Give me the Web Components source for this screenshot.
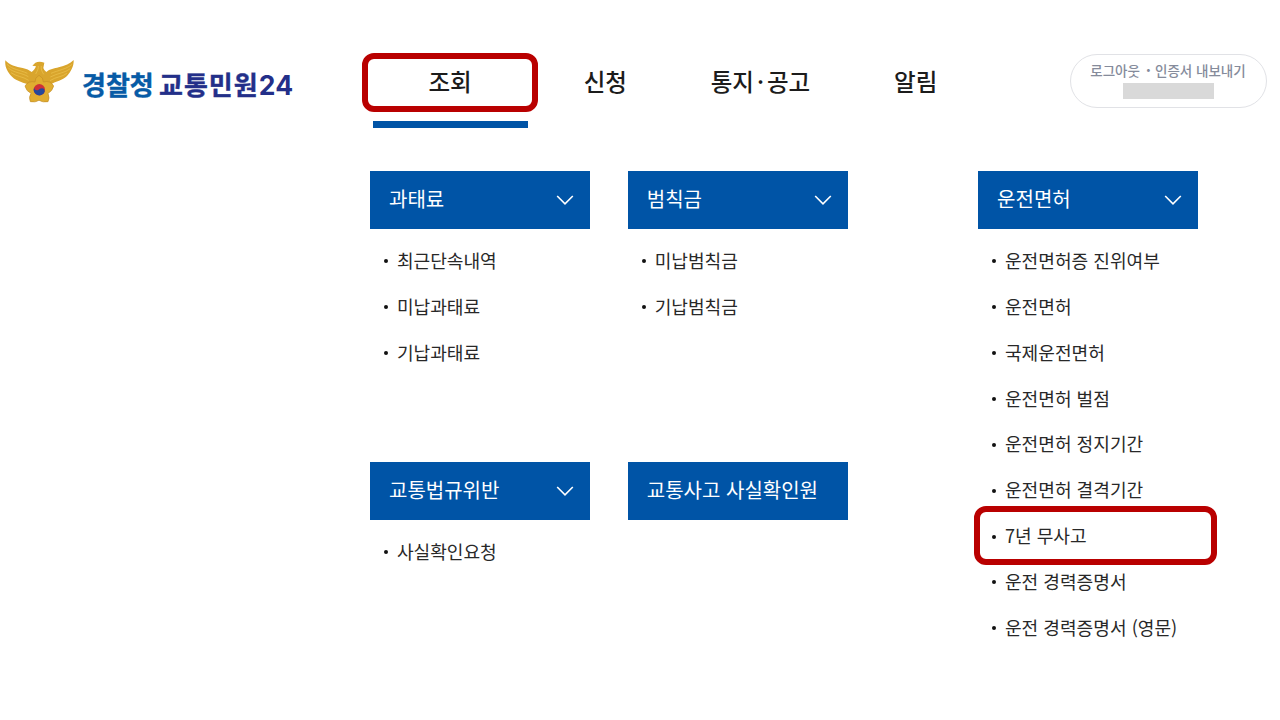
<!DOCTYPE html>
<html lang="ko">
<head>
<meta charset="UTF-8">
<title>경찰청 교통민원24</title>
<style>
    body {
        margin: 0;
        width: 1280px;
        height: 720px;
        overflow: hidden;
        background: #fff;
        color: #222;
        font-family: "Noto Sans CJK KR", "Noto Sans", sans-serif;
        --blue: #0054a6;
        --red: #b90000;
    }
</style>
</head>
<body>
<efine-app></efine-app>

<script>
class EfineLogo extends HTMLElement {
    constructor() {
        super();
        this.attachShadow({ mode: 'open' });
    }

    connectedCallback() {
        this.shadowRoot.innerHTML = `
        <style>
            :host {
                display: flex;
                align-items: center;
                width: 372.5px;
                height: 60px;
            }
            svg { width: 80px; height: 60px; flex: none; }
            .name {
                display: flex;
                align-items: baseline;
                margin-left: 2px;
                margin-top: 7px;
                font-size: 26px;
                line-height: 36px;
                font-weight: 700;
                white-space: nowrap;
            }
            .police { color: #075ba6; width: 77px; -webkit-text-stroke: 0.4px #075ba6; }
            .service { color: #232f89; letter-spacing: 1px; -webkit-text-stroke: 0.4px #232f89; }
            .num {
                color: #232f89;
                font-family: Inter, "Liberation Sans", sans-serif;
                font-size: 26.5px;
                line-height: 30px;
                letter-spacing: 0.3px;
            }
        </style>
        <svg viewBox="0 0 240 180">
            <path fill="#d9a52d" d="M16 31 C27 44 49 52 68 54 C79 56 88 61 95 66 C101 62 105 56 108 49 L97 47 L106 38 Q118 33 133 38 L130 54 Q132 61 139 66 C149 57 163 56 176 52 C195 47 210 41 221 30 C222 48 213 65 201 78 C187 91 168 94 153 103 L84 103 C64 96 44 91 31 75 C20 62 14 48 16 31Z"/>
            <g fill="none" stroke="#edc450" stroke-width="2">
                <path d="M21 43 C37 59 61 60 82 70 M25 54 C42 69 65 68 85 80 M33 68 C49 80 68 79 86 91"/>
                <path d="M216 43 C201 57 174 61 153 70 M211 56 C195 69 173 69 151 81 M201 70 C187 81 168 80 150 92"/>
                <path d="M115 48 C116 54 112 63 107 72 M124 48 C122 56 126 65 131 73"/>
            </g>
            <path fill="#e0ad30" stroke="#c28d25" stroke-width="2" d="M117 76 Q131 83 130 96 Q151 90 161 108 Q157 124 144 130 Q150 145 144 155 Q128 158 117 151 Q106 158 91 155 Q85 142 93 130 Q79 124 75 108 Q86 91 105 96 Q104 83 117 76Z"/>
            <circle cx="118" cy="119" r="17" fill="#cf3036"/>
            <path fill="#24499b" d="M102 113 A17 17 0 1 0 134 125 Q134 115 126 115 Q119 116 115 120 Q104 123 102 113Z"/>
        </svg>
        <div class="name"><span class="police">경찰청</span><span class="service">교통민원</span><span class="num">24</span></div>`;
    }
}

class EfineTab extends HTMLElement {
    constructor() {
        super();
        this.attachShadow({ mode: 'open' });
    }

    connectedCallback() {
        this.shadowRoot.innerHTML = `
        <style>
            :host {
                display: flex;
                align-items: center;
                justify-content: center;
                position: relative;
                box-sizing: border-box;
                width: 155.2px;
                height: 83px;
                padding-bottom: 3.5px;
                border-bottom: 7.5px solid transparent;
                font-size: 23.5px;
                line-height: 34px;
                font-weight: 500;
                color: #1c1c1c;
                white-space: nowrap;
            }
            :host([active]) { border-bottom-color: var(--blue); }
            ::slotted(b) {
                width: 13px;
                font-weight: 500;
                text-align: center;
            }
        </style>
        <slot></slot>`;
    }
}

class EfineUser extends HTMLElement {
    constructor() {
        super();
        this.attachShadow({ mode: 'open' });
    }

    connectedCallback() {
        this.shadowRoot.innerHTML = `
        <style>
            :host {
                display: flex;
                flex-direction: column;
                align-items: center;
                box-sizing: border-box;
                width: 197px;
                height: 54px;
                padding-top: 5px;
                border: 1px solid #e1e2e6;
                border-radius: 27px;
                color: #858b9b;
                font-size: 13.5px;
                line-height: 20px;
                font-weight: 500;
                white-space: nowrap;
            }
            .links { display: flex; }
            .dot { width: 15px; text-align: center; font-weight: 900; text-indent: 2px; }
            .id { width: 91px; height: 16px; margin-top: 3px; background: #d9d9d9; }
        </style>
        <div class="links"><span>로그아웃</span><span class="dot">·</span><span>인증서 내보내기</span></div>
        <div class="id"></div>`;
    }
}

// Marco rojo que resalta el elemento que lo contiene
class EfineMark extends HTMLElement {
    constructor() {
        super();
        this.attachShadow({ mode: 'open' });
    }

    connectedCallback() {
        this.shadowRoot.innerHTML = `
        <style>
            :host {
                display: block;
                position: absolute;
                box-sizing: border-box;
                border: 6px solid var(--red);
                border-radius: 12px;
                pointer-events: none;
            }
        </style>`;
    }
}

class EfineGroup extends HTMLElement {
    constructor() {
        super();
        this.attachShadow({ mode: 'open' });
    }

    connectedCallback() {
        const title = this.getAttribute('title-text') ?? '';
        const arrow = this.hasAttribute('arrow')
            ? '<svg viewBox="0 0 18 12"><path d="M1.2 2 L9 9.9 L16.8 2" fill="none" stroke="#fff" stroke-width="1.6"/></svg>'
            : '';
        this.shadowRoot.innerHTML = `
        <style>
            :host { display: block; }
            header {
                display: flex;
                align-items: center;
                justify-content: space-between;
                box-sizing: border-box;
                width: 219.8px;
                height: 58px;
                padding: 0 16px 0 19px;
                background: var(--blue);
                color: #fff;
                font-size: 20px;
                line-height: 30px;
                white-space: nowrap;
            }
            span { margin-bottom: 1px; }
            svg { width: 18px; height: 12px; }
            .items { padding: 10px 0 0 14.2px; }
        </style>
        <header><span>${title}</span>${arrow}</header>
        <div class="items"><slot></slot></div>`;
    }
}

class EfineItem extends HTMLElement {
    constructor() {
        super();
        this.attachShadow({ mode: 'open' });
    }

    connectedCallback() {
        this.shadowRoot.innerHTML = `
        <style>
            :host {
                display: flex;
                align-items: center;
                position: relative;
                height: 45.87px;
                font-size: 18.1px;
                line-height: 28px;
                color: #282828;
                white-space: nowrap;
            }
            i {
                width: 4px;
                height: 4px;
                margin-right: 8.7px;
                border-radius: 50%;
                background: #111;
            }
            span { margin-bottom: 2.8px; }
        </style>
        <i></i><span><slot></slot></span>`;
    }
}

class EfineApp extends HTMLElement {
    constructor() {
        super();
        this.attachShadow({ mode: 'open' });
    }

    connectedCallback() {
        this.shadowRoot.innerHTML = `
        <style>
            :host { display: block; }
            .top {
                display: flex;
                align-items: flex-start;
                height: 125.5px;
                padding-top: 45px;
            }
            efine-logo { margin-top: 5px; flex: none; }
            nav { display: flex; }
            efine-user { margin: 9px 13.5px 0 auto; }
            .menu {
                display: grid;
                grid-template-columns: 257.8px 350.3px 220px;
                grid-template-rows: 291px auto;
                padding-left: 370px;
            }
            .license { grid-column: 3; grid-row: 1 / 3; }
            .tab-mark { left: -10.5px; top: 8px; width: 176px; height: 59px; }
            .item-mark { left: -18.2px; top: -7.6px; width: 243px; height: 59px; }
        </style>
        <div class="top">
            <efine-logo></efine-logo>
            <nav>
                <efine-tab active>조회<efine-mark class="tab-mark"></efine-mark></efine-tab>
                <efine-tab>신청</efine-tab>
                <efine-tab>통지<b>·</b>공고</efine-tab>
                <efine-tab>알림</efine-tab>
            </nav>
            <efine-user></efine-user>
        </div>
        <div class="menu">
            <efine-group title-text="과태료" arrow>
                <efine-item>최근단속내역</efine-item>
                <efine-item>미납과태료</efine-item>
                <efine-item>기납과태료</efine-item>
            </efine-group>
            <efine-group title-text="범칙금" arrow>
                <efine-item>미납범칙금</efine-item>
                <efine-item>기납범칙금</efine-item>
            </efine-group>
            <efine-group class="license" title-text="운전면허" arrow>
                <efine-item>운전면허증 진위여부</efine-item>
                <efine-item>운전면허</efine-item>
                <efine-item>국제운전면허</efine-item>
                <efine-item>운전면허 벌점</efine-item>
                <efine-item>운전면허 정지기간</efine-item>
                <efine-item>운전면허 결격기간</efine-item>
                <efine-item>7년 무사고<efine-mark class="item-mark"></efine-mark></efine-item>
                <efine-item>운전 경력증명서</efine-item>
                <efine-item>운전 경력증명서 (영문)</efine-item>
            </efine-group>
            <efine-group title-text="교통법규위반" arrow>
                <efine-item>사실확인요청</efine-item>
            </efine-group>
            <efine-group title-text="교통사고 사실확인원"></efine-group>
        </div>`;
    }
}

customElements.define('efine-logo', EfineLogo);
customElements.define('efine-tab', EfineTab);
customElements.define('efine-user', EfineUser);
customElements.define('efine-mark', EfineMark);
customElements.define('efine-group', EfineGroup);
customElements.define('efine-item', EfineItem);
customElements.define('efine-app', EfineApp);
</script>
</body>
</html>
